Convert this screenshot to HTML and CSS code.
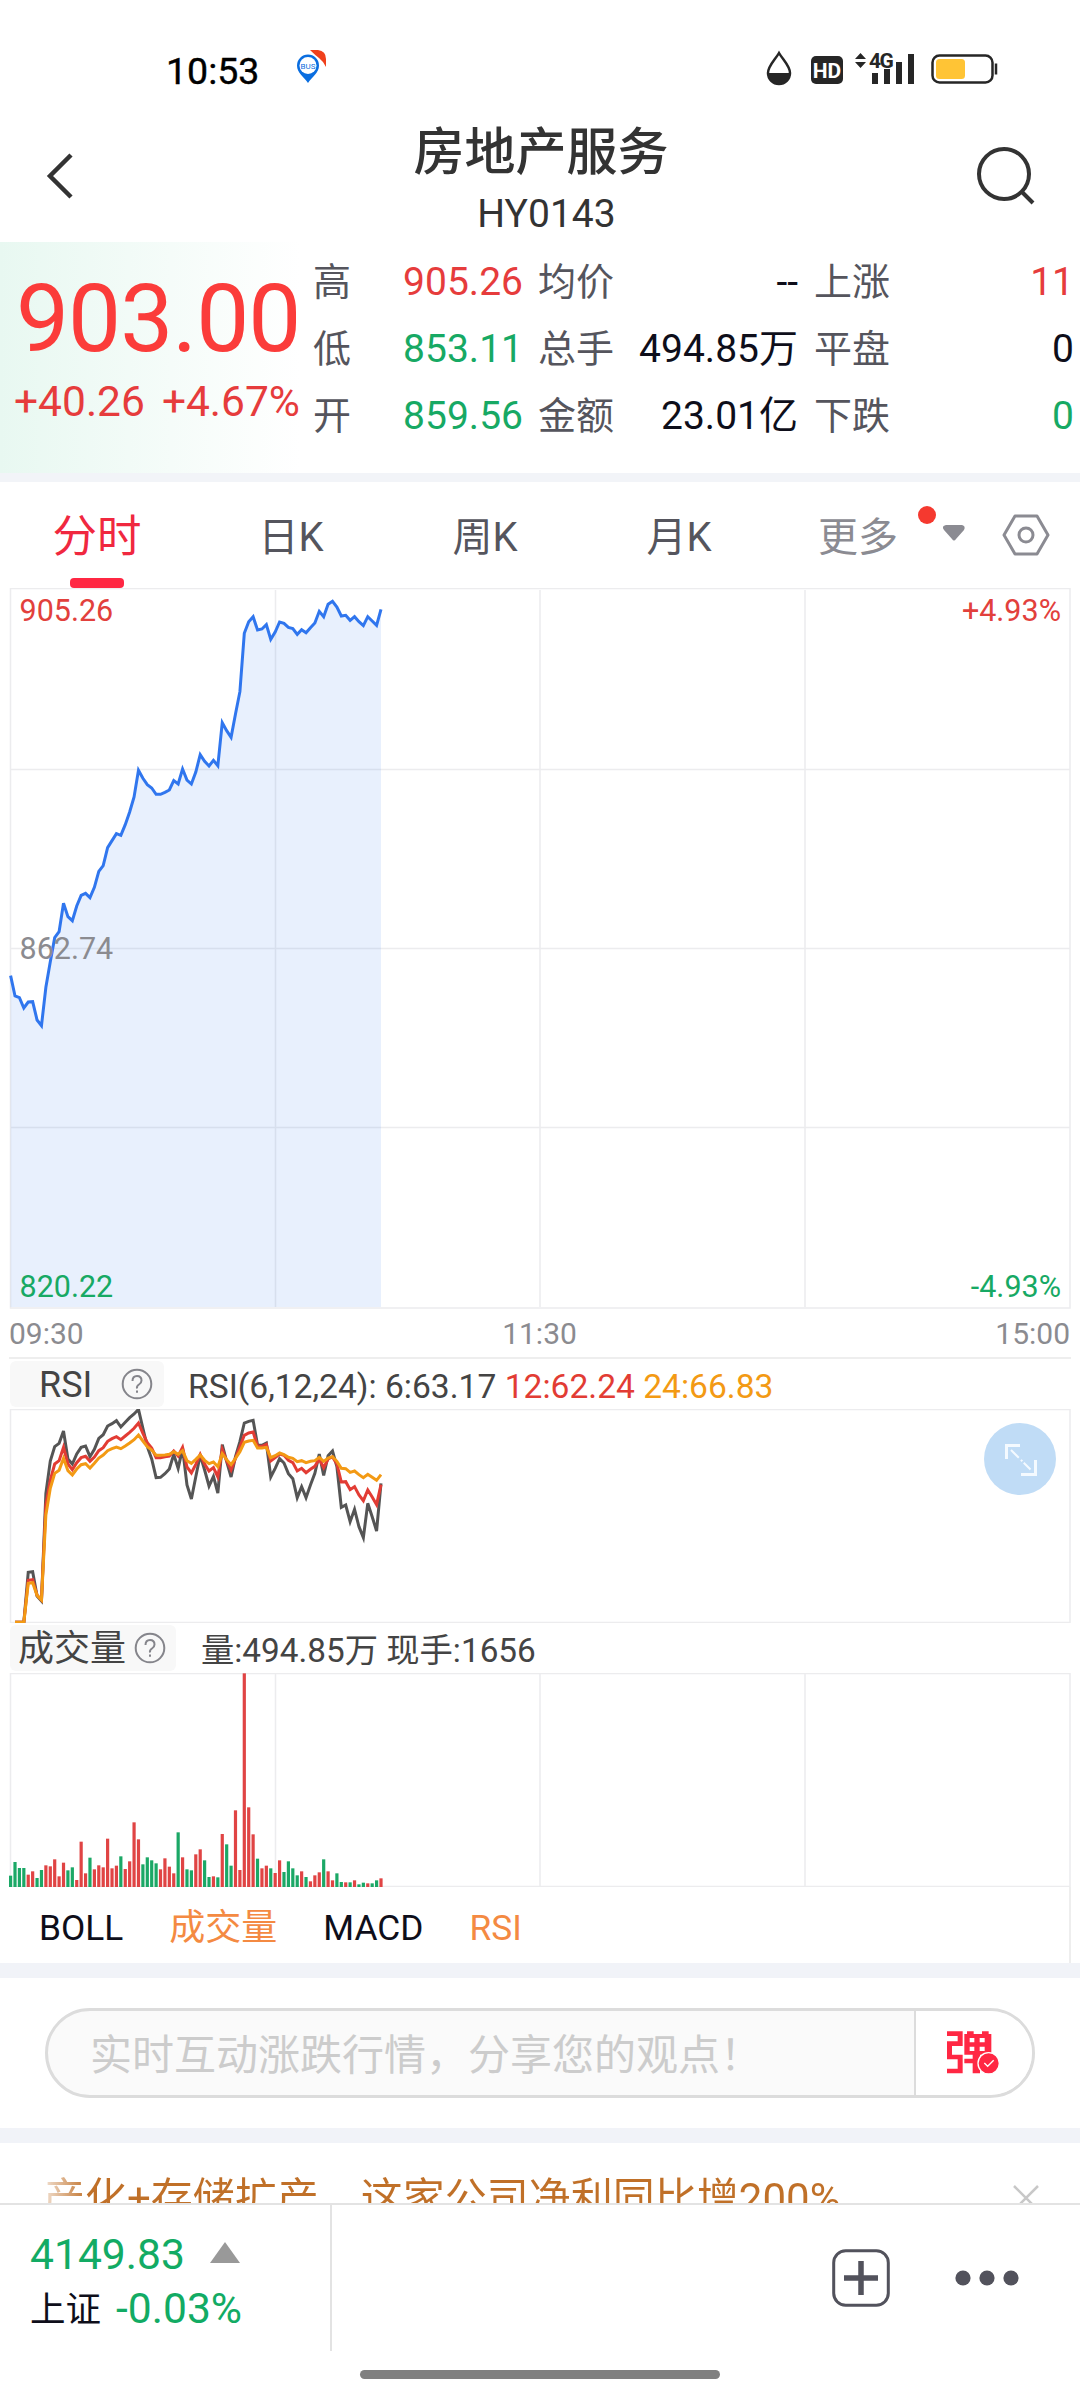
FILE: index.html
```html
<!DOCTYPE html>
<html lang="zh-CN">
<head>
<meta charset="utf-8">
<title>房地产服务 HY0143</title>
<link rel="stylesheet" href="styles.css">
</head>
<body>
<div class="screen">
  <div class="status">
    <span class="clock">10:53</span>
    <svg class="bus" width="32" height="34" viewBox="0 0 32 34">
      <path d="M12 33C8 27 1 23 1 15.500a11 11 0 0 1 22 0C23 23 16 27 12 33z" fill="#0a6ee0"/>
      <circle cx="12" cy="15.500" r="8.500" fill="#fff"/>
      <text class="bus-text" x="12" y="18.500">BUS</text>
      <path d="M14 0h8q8 1 8 9v8q-3-6-7-9t-9-8z" fill="#f0401c"/>
    </svg>
    <svg class="signals" width="236" height="40" viewBox="0 0 236 40">
      <path d="M14 4C10 11 3 17 3 24a11 11 0 0 0 22 0C25 17 18 11 14 4z" fill="#fff" stroke="#262626" stroke-width="2.500"/>
      <path d="M3 24h22a11 11 0 0 1-22 0z" fill="#262626"/>
      <rect x="46" y="7" width="32" height="28" rx="5" fill="#262626"/>
      <text class="hd" x="62" y="28.500">HD</text>
      <path d="M90 10l5.500-6 5.500 6zM90 13l5.500 6 5.500-6z" fill="#262626"/>
      <text class="net" x="104" y="18.500">4G</text>
      <path d="M107 24h6v11h-6zM119 20h6v15h-6zM131 13h6v22h-6zM143 5h6v30h-6z" fill="#262626"/>
      <rect x="167.500" y="6.500" width="60" height="27" rx="7" fill="#fff" stroke="#262626" stroke-width="2.500"/>
      <rect x="171" y="10" width="29" height="20" rx="3.500" fill="#ffc435"/>
      <path d="M231 14.500v11" stroke="#262626" stroke-width="2.500"/>
    </svg>
  </div>

  <header class="header">
    <svg width="30" height="48" viewBox="0 0 30 48"><path d="M26 3L5 24l21 21" fill="none" stroke="#333" stroke-width="4.500"/></svg>
    <div class="titles">
      <h1 class="title">房地产服务</h1>
      <div class="code">HY0143</div>
    </div>
    <svg width="62" height="62" viewBox="0 0 62 62"><circle cx="29" cy="29" r="25" fill="none" stroke="#333" stroke-width="4"/><path d="M46 46l12 12" stroke="#333" stroke-width="4"/></svg>
  </header>

  <section class="quote">
    <div class="price-box">
      <div class="price">903.00</div>
      <div class="change"><span>+40.26</span><span>+4.67%</span></div>
    </div>
    <dl class="stats high">
      <div><dt>高</dt><dd class="up">905.26</dd></div>
      <div><dt>低</dt><dd class="down">853.11</dd></div>
      <div><dt>开</dt><dd class="down">859.56</dd></div>
    </dl>
    <dl class="stats total">
      <div><dt>均价</dt><dd>--</dd></div>
      <div><dt>总手</dt><dd>494.85万</dd></div>
      <div><dt>金额</dt><dd>23.01亿</dd></div>
    </dl>
    <dl class="stats count">
      <div><dt>上涨</dt><dd class="up">11</dd></div>
      <div><dt>平盘</dt><dd>0</dd></div>
      <div><dt>下跌</dt><dd class="down">0</dd></div>
    </dl>
  </section>

  <nav class="tabs">
    <span class="tab active">分时</span>
    <span class="tab">日K</span>
    <span class="tab">周K</span>
    <span class="tab">月K</span>
    <span class="tab more">更多</span>
    <svg class="tab-icons" width="142" height="60" viewBox="0 0 142 60">
      <circle cx="14" cy="10" r="9" fill="#f5392f"/>
      <path d="M33 20h16q4 1 2 5l-8 9q-2 3-4 0l-8-9q-3-4 2-5z" fill="#8b8b92"/>
      <path d="M102 11h22l11 19-11 19h-22l-11-19z" fill="none" stroke="#8b8b92" stroke-width="3" stroke-linejoin="round"/>
      <circle cx="113" cy="30" r="7" fill="none" stroke="#8b8b92" stroke-width="3"/>
    </svg>
  </nav>

  <section class="chart trend">
    <svg width="1080" height="721" viewBox="0 588 1080 721">
      <path class="grid" d="M10.500 588.500H1070V1308H10.500zM275.500 590V1307M540 590V1307M805 590V1307M11 769.500H1070M11 948.500H1070M11 1127.500H1070"/>
      <path class="area" id="area" d=""/>
      <polyline class="line blue" id="trend"/>
    </svg>
    <span class="scale top left up">905.26</span>
    <span class="scale mid left">862.74</span>
    <span class="scale low left down">820.22</span>
    <span class="scale top right up">+4.93%</span>
    <span class="scale low right down">-4.93%</span>
  </section>
  <div class="axis"><span>09:30</span><span>11:30</span><span>15:00</span></div>

  <div class="indicator-head rsi-head">
    <div class="pill"><span>RSI</span>
      <svg width="32" height="32" viewBox="0 0 32 32"><circle cx="16" cy="16" r="14.300"/><path d="M11.500 13q0-5 4.500-5t4.500 4.500q0 2.500-2.500 4t-2 4M16 22.500v2.200"/></svg>
    </div>
    <div class="readout"><span>RSI(6,12,24):</span> <span>6:63.17</span> <span class="red">12:62.24</span> <span class="orange">24:66.83</span></div>
  </div>
  <section class="chart rsi">
    <svg width="1080" height="214" viewBox="0 1409 1080 214">
      <path class="grid" d="M10.500 1409.500H1070V1622.500H10.500z"/>
      <polyline class="line gray" id="rsi6"/>
      <polyline class="line red-line" id="rsi12"/>
      <polyline class="line orange-line" id="rsi24"/>
    </svg>
    <svg class="expand" width="72" height="72" viewBox="0 0 72 72"><circle cx="36" cy="36" r="36" fill="#c0dcf6"/><path d="M22.500 36V22.500H36M37 51.500h14.500V37" fill="none" stroke="#f4faff" stroke-width="3"/><path d="M27 27l19.500 19.500" stroke="#f4faff" stroke-width="2" stroke-dasharray="11 3 2 2"/></svg>
  </section>

  <div class="indicator-head vol-head">
    <div class="pill"><span>成交量</span>
      <svg width="32" height="32" viewBox="0 0 32 32"><circle cx="16" cy="16" r="14.300"/><path d="M11.500 13q0-5 4.500-5t4.500 4.500q0 2.500-2.500 4t-2 4M16 22.500v2.200"/></svg>
    </div>
    <div class="readout">量:494.85万 现手:1656</div>
  </div>
  <section class="chart">
    <svg width="1080" height="214" viewBox="0 1673 1080 214">
      <path class="grid" d="M10.500 1673.500H1070V1886.500H10.500zM275.500 1673V1886M540 1673V1886M805 1673V1886"/>
      <g id="volume"></g>
    </svg>
  </section>

  <div class="switcher"><span>BOLL</span><span class="on cjk">成交量</span><span>MACD</span><span class="on">RSI</span></div>

  <section class="comment">
    <div class="input">
      <span class="placeholder">实时互动涨跌行情，分享您的观点！</span>
      <div class="barrage">
        <svg width="54" height="44" viewBox="78 65 162 132">
          <path fill="#ff2743" fill-rule="evenodd" d="M78 66h47v44H93v26h32v56H78v-14h32v-28H78V96h32V80H78zM138 66h20v8h25v-8h20v8h8v62h-34v12h8v14h-8v30h-22v-30h-25v-14h25v-12h-25V74h8zM146 86v13h14V86zM176 86v13h15V86zM146 112v13h14v-13zM176 112v13h15v-13z"/>
          <circle cx="203" cy="162" r="32" fill="#ff2743" stroke="#fff" stroke-width="4"/>
          <path d="M190 161l10 10 18-18" fill="none" stroke="#fff" stroke-width="4"/>
        </svg>
      </div>
    </div>
  </section>

  <section class="news">
    <span class="headline">产化+存储扩产　这家公司净利同比增200%</span>
    <svg width="26" height="26" viewBox="0 0 26 26"><path d="M1 1l24 24M25 1L1 25" stroke="#c8c8c8" stroke-width="2.500"/></svg>
  </section>

  <footer class="bottom">
    <div class="index">
      <div class="index-row"><span class="index-value">4149.83</span><svg class="arrow" width="30" height="21" viewBox="0 0 30 21"><path d="M15 0l15 21H0z" fill="#999"/></svg></div>
      <div class="index-row second"><span class="index-name">上证</span><span class="index-value">-0.03%</span></div>
    </div>
    <div class="actions">
      <svg width="58" height="58" viewBox="0 0 58 58"><rect x="1.700" y="1.700" width="54.600" height="54.600" rx="12" fill="none" stroke="#52525c" stroke-width="3"/><path d="M12 29h34M29 12v34" stroke="#52525c" stroke-width="5.500"/></svg>
      <svg width="64" height="16" viewBox="0 0 64 16" fill="#52525c"><circle cx="8" cy="8" r="7.600"/><circle cx="32" cy="8" r="7.600"/><circle cx="56" cy="8" r="7.600"/></svg>
    </div>
    <div class="home"></div>
  </footer>
</div>
<script src="script.js"></script>
</body>
</html>
```
FILE: styles.css
```css
* { box-sizing: border-box; }
body { margin: 0; background: #fff; font-family: Roboto, "Noto Sans CJK SC", sans-serif; color: #0e0e1a; }
svg { display: block; flex: none; }
dl, dd, h1 { margin: 0; }
.screen { width: 1080px; height: 2400px; overflow: hidden; display: flex; flex-direction: column; }
.screen > * { flex: none; }
.up { color: #e63c3c; }
.down { color: #17a964; }

.status { height: 108px; display: flex; align-items: flex-start; padding: 50px 79px 0 166px; }
.clock { font-size: 37.5px; line-height: 42px; color: #000; width: 129px; -webkit-text-stroke: .4px #000; }
.bus { margin-left: 1px; }
.bus-text { font-size: 8px; fill: #0a6ee0; text-anchor: middle; }
.signals { margin-left: auto; margin-top: -1px; }
.hd { font-size: 21px; font-weight: 700; fill: #fff; text-anchor: middle; }
.net { font-size: 21px; font-weight: 700; fill: #262626; letter-spacing: -1.500px; }

.header { height: 134px; padding: 0 43px 0 45px; display: flex; justify-content: space-between; color: #333; }
.header > svg { margin-top: 44px; }
.header > svg:last-child { margin-top: 37px; }
.titles { width: 400px; margin-left: 32px; padding-top: 13px; text-align: center; }
.title { font-size: 51px; line-height: 64px; font-weight: 500; }
.code { font-size: 39px; line-height: 46px; margin-top: 6px; padding-left: 11px; }

.quote { height: 240px; display: flex; border-bottom: 9px solid #f2f4f8; }
.price-box { width: 313px; padding: 24px 0 0 14px; color: #fb3c3a; background: linear-gradient(90deg, #e8f8f1, #fff 300px); }
.price { font-size: 94.5px; line-height: 106px; letter-spacing: -1px; padding-left: 2px; }
.change { display: flex; gap: 17px; font-size: 42.5px; line-height: 50px; margin-top: 5px; color: #e63c3c; white-space: nowrap; }
.stats { padding-top: 6px; }
.stats > div { height: 67px; display: flex; justify-content: space-between; align-items: center; font-size: 39px; line-height: 50px; white-space: nowrap; }
.stats dt { color: #55555d; font-size: 38px; }
.high { width: 210px; margin-right: 15px; }
.total { width: 260px; margin-right: 16px; }
.count { width: 260px; }

.tabs { height: 106px; display: flex; }
.tab { width: 194px; line-height: 111px; font-size: 40px; text-align: center; color: #55555d; position: relative; }
.tab.active { font-size: 44.5px; color: #f0283f; }
.tab.active::after { content: ""; position: absolute; left: 70px; bottom: 0; width: 54px; height: 10px; border-radius: 4px; background: #ff2743; }
.tab.more { width: 137px; padding-left: 27px; color: #8b8b92; text-align: center; }
.tab-icons { margin-top: 23px; }

.chart { position: relative; }
.grid { fill: none; stroke: #ececee; stroke-width: 1.500; }
.area { fill: #2f76f0; fill-opacity: .11; }
.line { fill: none; stroke-width: 3; stroke-linejoin: miter; }
.blue { stroke: #3076ee; }
.gray { stroke: #555; }
.red-line { stroke: #e23c34; }
.orange-line { stroke: #f39a14; }
.scale { position: absolute; font-size: 30.5px; line-height: 36px; color: #8b8b90; }
.scale.up { color: #e2403c; }
.scale.down { color: #17a964; }
.top { top: 5px; }
.mid { top: 343px; }
.low { top: 681px; }
.left { left: 19.5px; }
.right { right: 19px; }
.axis { display: flex; justify-content: space-between; height: 48px; padding: 0 10px 0 9px; font-size: 30px; line-height: 50px; color: #8b8b90; }

.indicator-head { display: flex; font-size: 33px; color: #444; }
.rsi-head { height: 52px; margin: 0 9px; border-top: 2px solid #eee; padding: 2px 0 0 1px; font-size: 33.6px; }
.vol-head { height: 50px; padding: 2px 0 0 10px; font-size: 33.3px; }
.pill { display: flex; align-items: center; height: 46px; border-radius: 6px; background: #f8f8f8; line-height: 49px; font-size: 36px; }
.pill span { height: 46px; }
.pill svg { fill: none; stroke: #85858b; stroke-width: 2; }
.rsi-head .pill { width: 154px; padding-left: 29px; gap: 29px; }
.vol-head .pill { width: 166px; padding-left: 8px; gap: 8px; }
.readout { line-height: 51px; margin-left: 24px; white-space: pre; }
.vol-head .readout { margin-left: 25px; }
.red { color: #e23c34; }
.orange { color: #f39a14; }
.expand { position: absolute; left: 984px; top: 14px; }

.switcher { height: 76px; margin-right: 9px; border-right: 2px solid #eee; padding-left: 39px; display: flex; gap: 46px; font-size: 35.3px; line-height: 82px; }
.cjk { font-size: 36px; }
.on { color: #f48a42; }
.comment { height: 180px; border: solid #f1f3f8; border-width: 15px 0; padding: 30px 45px; }
.input { height: 90px; display: flex; border: 3px solid #dcdcdc; border-radius: 45px; overflow: hidden; background: #fafafa; }
.placeholder { width: 866px; padding-left: 42px; font-size: 42px; line-height: 90px; color: #ccc; white-space: nowrap; }
.barrage { flex: 1; display: flex; align-items: center; padding-left: 31px; background: #fff; border-left: 2px solid #dcdcdc; }
.news { height: 60px; padding: 32px 41px 0 43px; display: flex; justify-content: space-between; overflow: hidden; }
.headline { font-size: 42px; line-height: 50px; margin-top: -1px; white-space: nowrap; background: linear-gradient(90deg, #c0702833, #c07028 46px); background-clip: text; color: transparent; }
.news svg { margin-top: 10px; }
.bottom { height: 197px; border-top: 2px solid #e3e3e3; background: #fff; position: relative; display: flex; }
.index { width: 332px; height: 146px; border-right: 2px solid #e3e3e3; padding: 24px 0 0 30px; }
.index-row { display: flex; align-items: center; gap: 25px; height: 50px; white-space: nowrap; }
.arrow { margin-top: -3px; }
.second { gap: 15px; margin-top: 4px; }
.index-value { font-size: 42.6px; line-height: 50px; color: #12ab64; }
.index-name { font-size: 35.5px; line-height: 50px; padding-top: 4px; }
.actions { display: flex; align-items: center; height: 146px; margin-left: 500px; gap: 65px; }
.home { position: absolute; left: 360px; bottom: 21px; width: 360px; height: 9px; border-radius: 5px; background: #808080; }
```
FILE: script.js
```js
// One sample per minute; each series is in thirds of a pixel below its own offset.
const step = 370.4 / 84;
const xAt = i => (10.6 + i * step).toFixed(2);

const trend = [1187,1248,1253,1284,1266,1265,1320,1337,1222,1145,1073,1055,970,1010,1022,978,946,940,953,922,874,857,803,782,761,766,734,696,651,571,595,614,624,643,643,637,630,602,612,567,600,612,576,524,544,558,541,557,428,452,472,402,335,160,125,110,150,147,134,178,156,126,130,142,146,163,149,158,143,129,94,110,73,64,81,108,106,121,110,125,137,110,123,136,88];
const rsi6 = [697,697,697,547,545,618,633,310,213,170,160,123,207,222,192,172,168,200,178,145,134,108,101,92,111,97,83,72,58,115,170,207,263,262,251,237,193,235,175,285,327,260,195,240,288,259,309,164,215,261,200,155,99,94,91,165,166,159,261,235,206,219,251,266,323,290,323,285,250,192,256,197,183,230,352,345,395,358,410,443,340,380,423,280];
const rsi12 = [697,697,697,571,569,616,630,345,270,222,212,172,222,239,218,203,199,214,201,182,173,154,146,140,149,138,127,115,99,130,158,174,203,203,200,198,183,198,172,231,249,223,193,222,243,233,261,178,212,240,205,170,136,129,126,168,169,163,213,203,192,196,211,218,243,235,248,238,229,207,233,207,201,222,276,275,299,290,315,332,300,321,344,284];
const rsi24 = [697,697,697,580,578,616,630,375,295,250,241,205,242,255,237,224,221,234,220,204,195,182,176,171,176,168,159,149,135,153,170,180,196,196,195,193,185,193,182,212,220,208,195,211,221,216,230,191,209,224,205,185,157,153,151,174,174,172,203,197,189,194,202,205,215,212,218,214,212,202,214,204,200,214,235,236,247,243,254,263,253,262,271,254];
const volume = "767g 726g 744g 744g 764r 754r 774g 750g 736r 739r 718r 769r 728r 751g 742g 780r 665r 760r 713g 748r 736r 742r 656r 745r 737r 709g 747r 724r 607r 658r 733g 712g 721g 730g 748r 715r 740r 760r 637g 712r 748g 751g 703r 688r 721g 771g 769r 772g 642r 673g 737g 571r 750r 160r 562r 643r 716g 745r 737r 745g 759r 721r 756g 724g 745g 766g 754r 771g 784r 766r 757r 718g 754r 781r 760g 786g 787r 787g 781r 793g 788g 790r 790g 781g 775r".split(" ");

function plot(values, offset, first) {
  return values.map((v, i) => xAt(i + first) + "," + (offset + v / 3).toFixed(2)).join(" ");
}

const trendPoints = plot(trend, 580, 0);
document.getElementById("trend").setAttribute("points", trendPoints);
document.getElementById("area").setAttribute("d", "M" + trendPoints + " V1307 H10.6 Z");
document.getElementById("rsi6").setAttribute("points", plot(rsi6, 1390, 1));
document.getElementById("rsi12").setAttribute("points", plot(rsi12, 1390, 1));
document.getElementById("rsi24").setAttribute("points", plot(rsi24, 1390, 1));

const group = document.getElementById("volume");
volume.forEach((item, i) => {
  const top = 1620 + parseInt(item, 10) / 3;
  const bar = document.createElementNS("http://www.w3.org/2000/svg", "rect");
  bar.setAttribute("x", xAt(i) - 1.6);
  bar.setAttribute("y", top);
  bar.setAttribute("width", 3.2);
  bar.setAttribute("height", 1887 - top);
  bar.setAttribute("fill", item.endsWith("g") ? "#1ba866" : "#e04444");
  group.appendChild(bar);
});
```
